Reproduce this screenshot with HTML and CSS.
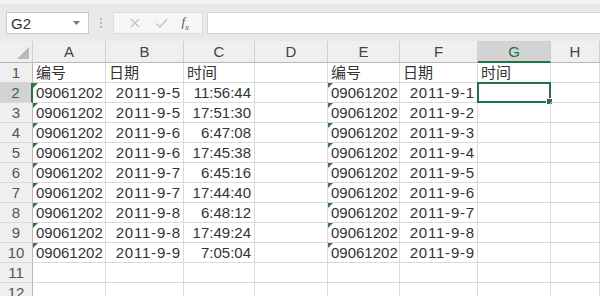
FILE: index.html
```html
<!DOCTYPE html>
<html lang="zh-CN">
<head>
<meta charset="utf-8">
<link rel="stylesheet" href="styles.css">
</head>
<body>
<div class="toolbar">
  <div class="namebox"><span class="name">G2</span><svg class="dd" width="7" height="4" viewBox="0 0 7 4"><path d="M0 0h7L3.5 4z" fill="#777"/></svg></div>
  <div class="sep"><i></i><i></i><i></i></div>
  <div class="fbtns">
    <svg width="12" height="12" viewBox="0 0 12 12"><path d="M2 2l8 8M10 2l-8 8" stroke="#c4c4c4" stroke-width="1.3" fill="none"/></svg>
    <svg width="13" height="12" viewBox="0 0 13 12"><path d="M1.5 6.5l3.5 3.5 7-8" stroke="#c4c4c4" stroke-width="1.3" fill="none"/></svg>
    <span class="fx">f<sub>x</sub></span>
  </div>
  <div class="finput"></div>
</div>
<div class="sheet">
  <div class="ch corner"><svg width="12" height="12" viewBox="0 0 12 12"><path d="M12 0v12H0z" fill="#b9b9b9"/></svg></div>
  <div class="ch">A</div><div class="ch">B</div><div class="ch">C</div><div class="ch">D</div><div class="ch">E</div><div class="ch">F</div><div class="ch sel">G</div><div class="ch">H</div>

  <div class="rh">1</div><div class="c">编号</div><div class="c">日期</div><div class="c">时间</div><div class="c"></div><div class="c">编号</div><div class="c">日期</div><div class="c">时间</div><div class="c"></div>
  <div class="rh sel">2</div><div class="c t">09061202</div><div class="c r d">2011-9-5</div><div class="c r">11:56:44</div><div class="c"></div><div class="c t">09061202</div><div class="c r d">2011-9-1</div><div class="c active"></div><div class="c"></div>
  <div class="rh">3</div><div class="c t">09061202</div><div class="c r d">2011-9-5</div><div class="c r">17:51:30</div><div class="c"></div><div class="c t">09061202</div><div class="c r d">2011-9-2</div><div class="c"></div><div class="c"></div>
  <div class="rh">4</div><div class="c t">09061202</div><div class="c r d">2011-9-6</div><div class="c r">6:47:08</div><div class="c"></div><div class="c t">09061202</div><div class="c r d">2011-9-3</div><div class="c"></div><div class="c"></div>
  <div class="rh">5</div><div class="c t">09061202</div><div class="c r d">2011-9-6</div><div class="c r">17:45:38</div><div class="c"></div><div class="c t">09061202</div><div class="c r d">2011-9-4</div><div class="c"></div><div class="c"></div>
  <div class="rh">6</div><div class="c t">09061202</div><div class="c r d">2011-9-7</div><div class="c r">6:45:16</div><div class="c"></div><div class="c t">09061202</div><div class="c r d">2011-9-5</div><div class="c"></div><div class="c"></div>
  <div class="rh">7</div><div class="c t">09061202</div><div class="c r d">2011-9-7</div><div class="c r">17:44:40</div><div class="c"></div><div class="c t">09061202</div><div class="c r d">2011-9-6</div><div class="c"></div><div class="c"></div>
  <div class="rh">8</div><div class="c t">09061202</div><div class="c r d">2011-9-8</div><div class="c r">6:48:12</div><div class="c"></div><div class="c t">09061202</div><div class="c r d">2011-9-7</div><div class="c"></div><div class="c"></div>
  <div class="rh">9</div><div class="c t">09061202</div><div class="c r d">2011-9-8</div><div class="c r">17:49:24</div><div class="c"></div><div class="c t">09061202</div><div class="c r d">2011-9-8</div><div class="c"></div><div class="c"></div>
  <div class="rh">10</div><div class="c t">09061202</div><div class="c r d">2011-9-9</div><div class="c r">7:05:04</div><div class="c"></div><div class="c t">09061202</div><div class="c r d">2011-9-9</div><div class="c"></div><div class="c"></div>
  <div class="rh">11</div><div class="c"></div><div class="c"></div><div class="c"></div><div class="c"></div><div class="c"></div><div class="c"></div><div class="c"></div><div class="c"></div>
  <div class="rh">12</div><div class="c"></div><div class="c"></div><div class="c"></div><div class="c"></div><div class="c"></div><div class="c"></div><div class="c"></div><div class="c"></div>
</div>
</body>
</html>
```

FILE: styles.css
```css
* { box-sizing: border-box; }
html, body { margin: 0; padding: 0; }
body {
  width: 600px;
  height: 296px;
  overflow: hidden;
  background: #ffffff;
  font-family: "Liberation Sans", "Noto Sans CJK SC", sans-serif;
  color: #333333;
}
.toolbar {
  height: 41px;
  background: #e9e9e9;
  border-top: 4px solid #f3f3f3;
  display: flex;
  align-items: flex-start;
  padding-top: 8px;
  padding-left: 6px;
}
.namebox {
  width: 83px;
  height: 22px;
  background: #fff;
  border: 1px solid #c9c9c9;
  display: flex;
  align-items: center;
  justify-content: space-between;
  padding: 0 8px 0 4px;
}
.name { font-size: 15px; color: #333; }
.sep {
  width: 24px;
  height: 22px;
  display: flex;
  flex-direction: column;
  align-items: center;
  justify-content: center;
  gap: 2px;
}
.sep i { width: 2px; height: 2px; background: #b5b5b5; display: block; }
.fbtns {
  width: 90px;
  height: 22px;
  background: #f6f6f6;
  border: 1px solid #dcdcdc;
  display: flex;
  align-items: center;
  justify-content: space-around;
  padding: 0 6px 0 8px;
}
.fx {
  font-family: "Liberation Serif", serif;
  font-style: italic;
  font-size: 13px;
  color: #555;
}
.fx sub { font-size: 9px; }
.finput {
  flex: 1;
  margin-left: 4px;
  height: 22px;
  background: #fff;
  border: 1px solid #d4d4d4;
  border-right: none;
}
.sheet {
  display: grid;
  grid-template-columns: 33px 73px 78px 71px 73px 72px 78px 73px 1fr;
  grid-template-rows: 22px repeat(12, 20px);
  font-size: 15px;
}
.ch {
  background: #efefef;
  border-right: 1px solid #d0d0d0;
  border-bottom: 1px solid #b8b8b8;
  text-align: center;
  line-height: 22px;
  color: #444;
}
.ch.sel {
  background: #d3d3d3;
  color: #217346;
  border-bottom: 2px solid #217346;
}
.corner {
  display: flex;
  align-items: flex-end;
  justify-content: flex-end;
  padding: 0 3px 3px 0;
}
.rh {
  background: #efefef;
  border-right: 1px solid #b8b8b8;
  border-bottom: 1px solid #d8d8d8;
  text-align: center;
  line-height: 19px;
  color: #555;
}
.rh.sel {
  background: #d3d3d3;
  color: #217346;
  border-right: 2px solid #217346;
}
.c {
  position: relative;
  border-right: 1px solid #dadada;
  border-bottom: 1px solid #dadada;
  line-height: 20px;
  padding: 0 3px;
  white-space: nowrap;
  overflow: visible;
}
.c.r { text-align: right; }
.c.d { letter-spacing: 0.8px; padding-right: 2px; }
.c.t::before {
  content: "";
  position: absolute;
  left: 0;
  top: 0;
  border-top: 5px solid #2f7a45;
  border-right: 5px solid transparent;
}
.c.active {
  border: 2px solid #217346;
  margin: -1px 0 0 -1px;
}
.c.active::after {
  content: "";
  position: absolute;
  right: -4px;
  bottom: -4px;
  width: 5px;
  height: 5px;
  background: #217346;
  border: 1px solid #fff;
}
```
